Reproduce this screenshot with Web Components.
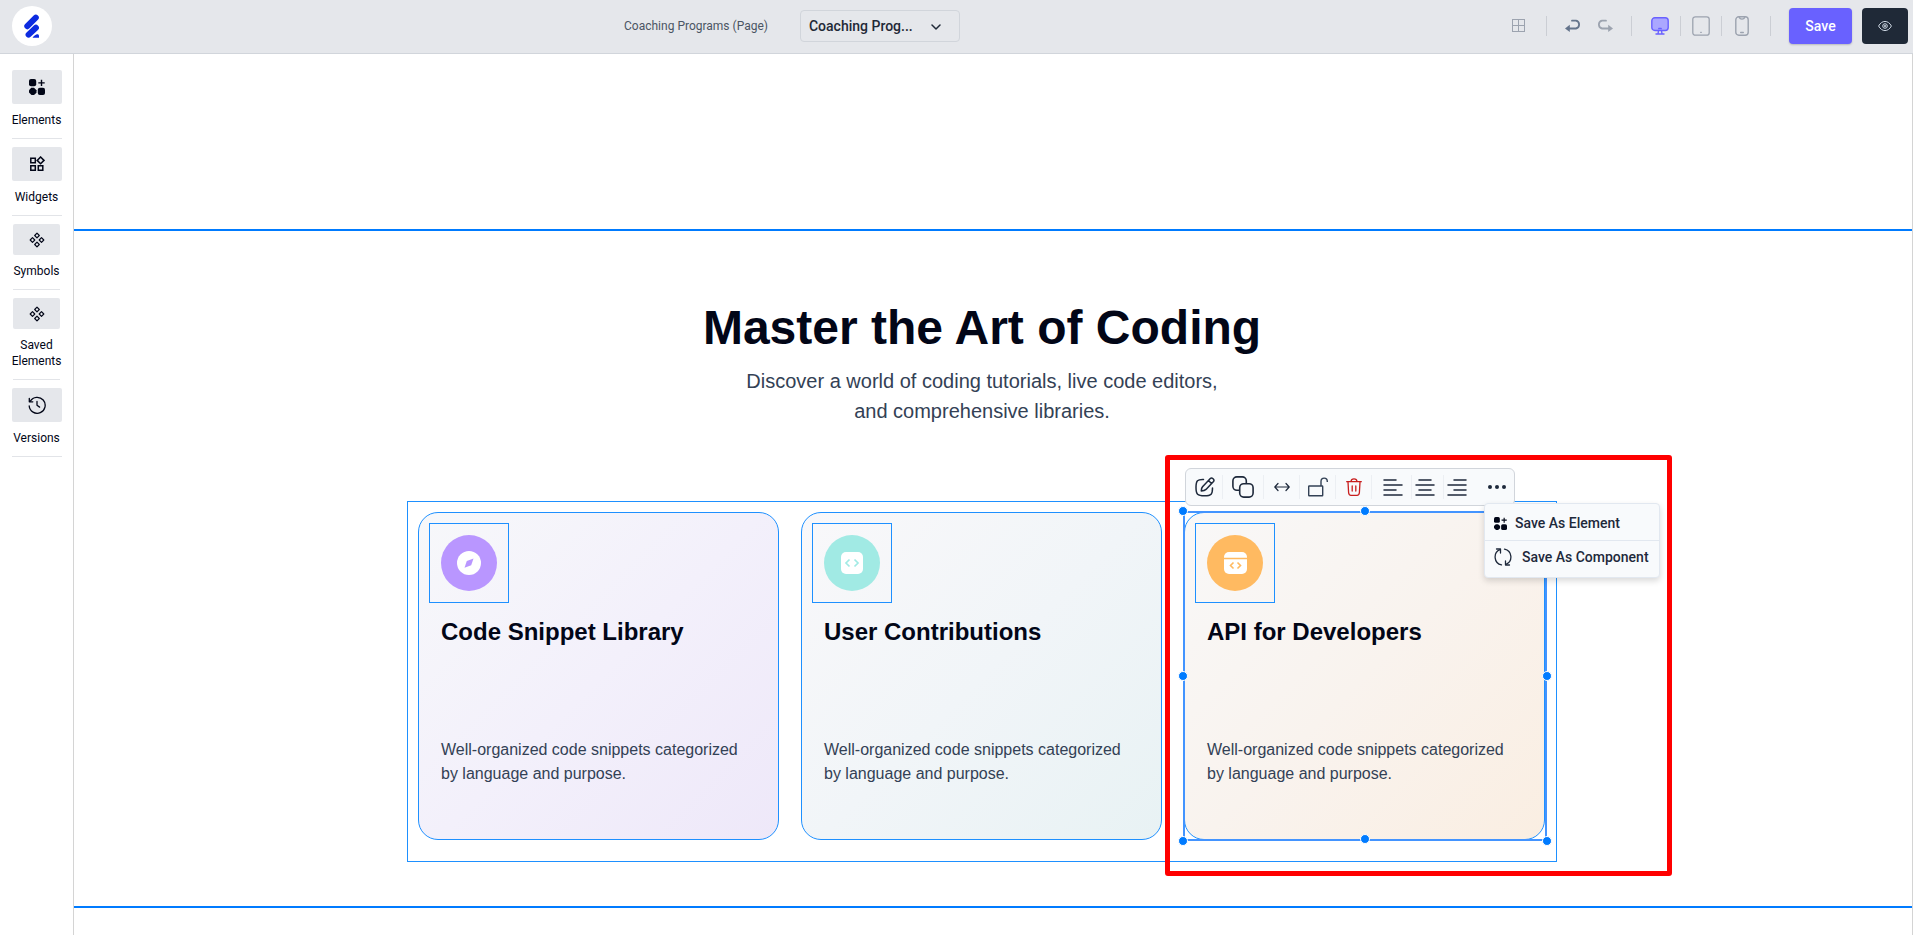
<!DOCTYPE html>
<html lang="en">
<head>
<meta charset="utf-8">
<title>Page Builder</title>
<style>
  html, body { margin: 0; height: 100%; }
  body { font-family: Roboto, "Open Sans", sans-serif; color: #020617; background: #fff; overflow: hidden; }
</style>
</head>
<body>
<page-builder></page-builder>

<script>
const ICONS = {
  elements: ['0 0 16 16', '<g fill="currentColor"><rect width="7.2" height="7.2" rx="2"/><rect x="8.8" y="8.8" width="7.2" height="7.2" rx="2"/><path d="M2.2 8.8h2.8l2.5 2.4v2.5L5 16H2.5L0 13.6v-2.4z"/><path d="M11.8.8h1.4v2.4h2.5v1.4h-2.5V7h-1.4V4.600H9.300V3.200h2.500z"/></g>'],
  widgets: ['0 0 16 16', '<g fill="none" stroke="currentColor" stroke-width="1.500"><path d="M1.800 2.200h4.500v4.500H1.800zM1.800 9.700h4.500v4.500H1.800zM9.300 9.700h4.500v4.500H9.300zM11.600 1l3.400 3.400-3.400 3.400-3.400-3.400z"/></g>'],
  symbols: ['0 0 16 16', '<g fill="none" stroke="currentColor" stroke-width="1.200" stroke-linejoin="round"><path d="M8 1.200 10.300 3.500 8 5.800 5.700 3.500zM8 10.200l2.300 2.300L8 14.800l-2.300-2.300zM3.500 5.700 5.800 8l-2.300 2.300L1.200 8zM12.500 5.700 14.800 8l-2.300 2.300L10.200 8z"/></g>'],
  versions: ['0 0 18 18', '<g fill="none" stroke="currentColor" stroke-width="1.300" stroke-linecap="round" stroke-linejoin="round"><path d="M2.300 5.200A8 8 0 1 1 1.200 10"/><path d="M1.300 2.300v3.500h3.500M9 5.500v3.800l2.600 1.800"/></g>'],
  logo: ['0 0 40 40', '<g stroke="#0c2be0" stroke-width="6" stroke-linecap="round"><path d="M15.300 20.200l8.500-8.500"/><path d="M16.600 28.600l7.300-6.900"/></g><path fill="#0c2be0" d="M20.500 31.800c2.500-3.800 6.500-4.600 6.500-1.600v1.600z"/>'],
  grid: ['0 0 14 14', '<g fill="none" stroke="#9ca3af" stroke-width="1"><rect x=".5" y=".5" width="12" height="12"/><path d="M6.500.500v12M.500 6.500h12"/></g>'],
  undo: ['0 0 16 14', '<path d="M3.500 9.500h7.500a4 4 0 0 0 0-7.800H7" fill="none" stroke="currentColor" stroke-width="1.800" stroke-linecap="round"/><path d="M4.800 5.800v7.200L0 9.500z" fill="currentColor"/>'],
  redo: ['0 0 16 14', '<path d="M12.500 9.500H5a4 4 0 0 1 0-7.800h4" fill="none" stroke="currentColor" stroke-width="1.800" stroke-linecap="round"/><path d="M11.200 5.800v7.200L16 9.500z" fill="currentColor"/>'],
  desktop: ['0 0 18 18', '<g stroke="#6961ff" stroke-width="1.400" stroke-linecap="round"><rect x=".8" y=".8" width="16.400" height="12.700" rx="3" fill="#aba7ff"/><path d="M7.500 13.500 7 17M10.500 13.500l.5 3.500M5 17h8M7.800 11.500h2.400"/></g>'],
  tablet: ['0 0 18 20', '<g fill="none" stroke="#9ca3af" stroke-width="1.300" stroke-linecap="round"><rect x=".8" y=".8" width="16.400" height="18.400" rx="2.500"/><path d="M8.700 16.300h.6"/></g>'],
  phone: ['0 0 14 20', '<g fill="none" stroke="#9ca3af" stroke-width="1.400" stroke-linecap="round"><rect x=".8" y=".8" width="12.400" height="18.400" rx="3"/><path d="M4.300 1.200c.4 2.500 5 2.500 5.400 0M5.700 16.500h2.600"/></g>'],
  eye: ['0 0 14 12', '<g fill="none" stroke="#cbd5e1" stroke-width="1"><path d="M.6 6C3.800-.1 10.200-.1 13.400 6 10.200 12.100 3.800 12.100.6 6z"/><circle cx="7" cy="6" r="2.300"/><circle cx="7" cy="6" r=".8"/></g>'],
  chevron: ['0 0 10 6', '<path d="M1 1l4 4 4-4" fill="none" stroke="#1f2937" stroke-width="1.500" stroke-linecap="round" stroke-linejoin="round"/>'],
  edit: ['0 0 20 20', '<g fill="none" stroke="currentColor" stroke-width="1.500" stroke-linecap="round" stroke-linejoin="round"><path d="M8.500 2.500C2.500 2.300 1 3.500 1 10.500s1.500 8.300 8.500 8.300 8-1.800 8-7.800"/><path d="M15.300 1.500c1.600-1.600 4.700 1.300 3.200 3l-7.500 7.900c-1 1-3 1.500-4.700 1.500.1-1.700.5-3.500 1.500-4.500zM13.500 3.500l3 3"/></g>'],
  copy: ['0 0 22 22', '<g fill="none" stroke="currentColor" stroke-width="1.600"><rect x=".9" y=".9" width="13.400" height="13.400" rx="4"/><rect x="7.700" y="7.700" width="13.400" height="13.400" rx="4" fill="#f8fafc"/></g>'],
  width: ['0 0 16 10', '<path d="M1 5h14M4 1.500.8 5 4 8.500M12 1.500 15.200 5 12 8.500" fill="none" stroke="currentColor" stroke-width="1.200" stroke-linecap="round" stroke-linejoin="round"/>'],
  unlock: ['0 0 20 20', '<g fill="none" stroke="#334155" stroke-width="1.400"><rect x=".7" y="9" width="14" height="9.800" rx=".5"/><path d="M13 9V4.500c0-4.500 6.300-4.500 6.300 0V5"/></g>'],
  trash: ['0 0 16 18', '<g fill="none" stroke="#c81e1e" stroke-width="1.300" stroke-linecap="round" stroke-linejoin="round"><path d="M.7 3.700h14.600M5 3.500C5.300 0 10.700 0 11 3.500M2 4l.6 10.500c.2 2.500.9 2.800 2.400 2.800h6c1.500 0 2.200-.3 2.400-2.800L14 4M6.200 8v5M9.800 8v5"/></g>'],
  alignLeft: ['0 0 20 18', '<path d="M1 2h12M1 7h18M1 12h12M1 17h18" fill="none" stroke="currentColor" stroke-width="1.500" stroke-linecap="round"/>'],
  alignCenter: ['0 0 20 18', '<path d="M4 2h12M1 7h18M4 12h12M1 17h18" fill="none" stroke="currentColor" stroke-width="1.500" stroke-linecap="round"/>'],
  alignRight: ['0 0 20 18', '<path d="M7 2h12M1 7h18M7 12h12M1 17h18" fill="none" stroke="currentColor" stroke-width="1.500" stroke-linecap="round"/>'],
  dots: ['0 0 18 4', '<g fill="currentColor"><circle cx="2" cy="2" r="2"/><circle cx="9" cy="2" r="2"/><circle cx="16" cy="2" r="2"/></g>'],
  cycle: ['0 0 18 18', '<g fill="none" stroke="currentColor" stroke-width="1.300" stroke-linecap="round" stroke-linejoin="round"><path d="M7.500 16.900A8 8 0 0 1 6 1.700M10.500 1.100A8 8 0 0 1 12 16.300"/><path d="M2.500 1H6.500V5M15.500 17h-4v-4"/></g>'],
  compass: ['0 0 56 56', '<circle cx="28" cy="28" r="28" fill="#b996ff"/><circle cx="28" cy="28" r="12" fill="#fff"/><path d="M32.500 23.500l-2.300 6.700-6.700 2.600 2.300-6.900z" fill="#b996ff"/>'],
  code: ['0 0 56 56', '<circle cx="28" cy="28" r="28" fill="#a1eae4"/><rect x="17" y="17" width="22" height="22" rx="5" fill="#fff"/><path d="M25.500 24.500 22 28l3.500 3.500M30.500 24.500 34 28l-3.500 3.500" fill="none" stroke="#a1eae4" stroke-width="1.700"/>'],
  api: ['0 0 56 56', '<circle cx="28" cy="28" r="28" fill="#ffba61"/><rect x="17" y="17" width="23" height="22" rx="5" fill="#fff"/><path d="M17 23.500h23M26.500 27.500l-3 3 3 3M30.500 27.500l3 3-3 3" fill="none" stroke="#ffba61" stroke-width="1.600"/>']
};

function define(name, html, setup) {
  const tpl = document.createElement('template');
  tpl.innerHTML = html;
  customElements.define(name, class extends HTMLElement {
    connectedCallback() {
      if (this.shadowRoot) return;
      const root = this.attachShadow({ mode: 'open' });
      root.append(tpl.content.cloneNode(true));
      if (setup) setup(this, root);
    }
  });
}

define('ui-icon', `
  <style>
    :host { display: block; flex: none; }
    svg { display: block; }
  </style>
  <svg aria-hidden="true"></svg>`,
  (host, root) => {
    const [box, art] = ICONS[host.getAttribute('name')];
    const [, , w, h] = box.split(' ').map(Number);
    const width = Number(host.getAttribute('size')) || w;
    const svg = root.querySelector('svg');
    svg.setAttribute('viewBox', box);
    svg.setAttribute('width', width);
    svg.setAttribute('height', Math.round(width * h / w));
    svg.innerHTML = art;
  });

define('top-bar', `
  <style>
    :host { display: flex; justify-content: space-between; align-items: center; height: 52px; padding: 0 5px 1px 12px; background: #e5e7eb; border-bottom: 1px solid #d1d5db; }
    .logo { width: 40px; height: 40px; border-radius: 50%; background: #fff; }
    .page, .tools { display: flex; align-items: center; }
    .page { gap: 32px; padding-left: 20px; }
    label { font-size: 12px; line-height: 16px; color: #4b5563; }
    .pick { position: relative; width: 160px; height: 32px; }
    .pick ui-icon { position: absolute; right: 19px; top: 14px; pointer-events: none; }
    select { appearance: none; box-sizing: border-box; width: 100%; height: 100%; padding: 0 40px 0 8px; border: 1px solid #d1d5db; border-radius: 4px; background: transparent; font: 500 14px/20px Roboto, sans-serif; color: #1f2937; }
    button { display: grid; place-items: center; padding: 0; border: 0; background: none; color: #9ca3af; }
    .undo { color: #64748b; }
    .line { width: 1px; height: 20px; background: #cbced4; }
    .tools { gap: 16px; }
    .grid { padding-right: 4px; }
    .history { display: flex; gap: 16px; padding: 0 2px; }
    .devices { display: flex; align-items: center; gap: 11px; padding: 0 3px; }
    .devices button { min-width: 18px; }
    .save { width: 63px; height: 36px; margin-left: 2px; border-radius: 4px; background: #6961ff; color: #fff; font: 500 14px/20px Roboto, sans-serif; box-shadow: 0 1px 2px #0003; }
    .preview { width: 46px; height: 36px; margin-left: -6px; border-radius: 4px; background: #1f2937; }
  </style>
  <div class="logo"><ui-icon name="logo"></ui-icon></div>
  <div class="page">
    <label for="page">Coaching Programs (Page)</label>
    <div class="pick"><select id="page"><option>Coaching Prog...</option></select><ui-icon name="chevron"></ui-icon></div>
  </div>
  <div class="tools">
    <button class="grid" aria-label="Grid"><ui-icon name="grid"></ui-icon></button>
    <span class="line"></span>
    <div class="history">
      <button class="undo" aria-label="Undo"><ui-icon name="undo"></ui-icon></button>
      <button aria-label="Redo"><ui-icon name="redo"></ui-icon></button>
    </div>
    <span class="line"></span>
    <div class="devices">
      <button aria-label="Desktop"><ui-icon name="desktop"></ui-icon></button>
      <span class="line"></span>
      <button aria-label="Tablet"><ui-icon name="tablet"></ui-icon></button>
      <span class="line"></span>
      <button aria-label="Phone"><ui-icon name="phone"></ui-icon></button>
    </div>
    <span class="line"></span>
    <button class="save">Save</button>
    <button class="preview" aria-label="Preview"><ui-icon name="eye"></ui-icon></button>
  </div>`);

define('side-item', `
  <style>
    :host { display: flex; flex-direction: column; align-items: center; width: 50px; padding-bottom: 10px; border-bottom: 1px solid #e2e4e8; }
    :host([small]) { width: 47px; }
    button { display: grid; place-items: center; width: 100%; height: 34px; padding: 0; border: 0; border-radius: 2px; background: #e5e7eb; color: #020617; }
    :host([small]) button { height: 31px; }
    span { margin-top: 8px; font-size: 12px; line-height: 16px; text-align: center; }
  </style>
  <button aria-labelledby="name"></button>
  <span id="name"><slot></slot></span>`,
  (host, root) => {
    const icon = document.createElement('ui-icon');
    icon.setAttribute('name', host.getAttribute('icon'));
    icon.setAttribute('size', host.getAttribute('size') || 16);
    root.querySelector('button').append(icon);
  });

define('side-bar', `
  <style>
    :host { display: flex; flex-direction: column; align-items: center; gap: 8px; width: 73px; padding-top: 16px; box-sizing: border-box; flex: none; }
  </style>
  <side-item icon="elements">Elements</side-item>
  <side-item icon="widgets">Widgets</side-item>
  <side-item icon="symbols" small>Symbols</side-item>
  <side-item icon="symbols" small>Saved<br>Elements</side-item>
  <side-item icon="versions" size="18">Versions</side-item>`);

define('feature-card', `
  <style>
    :host { display: grid; position: relative; }
    article { border: 1px solid #1e90ff; border-radius: 20px; padding: 10px 10px 53px; background: linear-gradient(135deg, var(--from), var(--mid), var(--to)); }
    .icon { width: 56px; padding: 11px; border: 1px solid #1e90ff; }
    h3, p { margin: 0; padding: 0 12px; }
    h3 { margin-top: 13px; font: bold 24px/32px "Liberation Sans", Arial, sans-serif; color: #020617; }
    p { margin-top: 90px; font: 16px/24px "Liberation Sans", Arial, sans-serif; color: #334155; }
  </style>
  <article>
    <div class="icon"><slot name="icon"></slot></div>
    <h3><slot name="title"></slot></h3>
    <p><slot></slot></p>
  </article>
  <slot name="overlay"></slot>`);

define('selection-frame', `
  <style>
    :host { display: block; position: absolute; inset: -1px -2px -1px -1px; border: 2px solid #4394ff; pointer-events: none; }
    i { position: absolute; width: 8px; height: 8px; margin: -5px; border: 1px solid #fff; border-radius: 50%; background: #007bff; }
    .t { top: -2px; } .m { top: 50%; } .b { top: calc(100% + 2px); }
    .l { left: -2px; } .c { left: 50%; } .r { left: calc(100% + 2px); }
    .b.c { top: 100%; }
  </style>
  <i class="t l"></i><i class="t c"></i><i class="m l"></i><i class="m r"></i><i class="b l"></i><i class="b c"></i><i class="b r"></i>`);

define('element-toolbar', `
  <style>
    :host { display: flex; align-items: center; position: absolute; left: 1px; top: -44px; box-sizing: border-box; width: 330px; height: 38px; padding-left: 1px; border: 1px solid #d1d5db; border-radius: 6px; background: #f8fafc; color: #1e293b; }
    button { display: flex; align-items: center; justify-content: center; box-sizing: border-box; width: 36px; height: 24px; padding: 0; border: 0; border-right: 1px solid #eceff3; background: none; color: inherit; }
    .wide { width: 41px; }
    .align { width: 32px; justify-content: flex-start; padding-left: 3px; }
    .align.first { width: 40px; padding-left: 11px; }
    .last { border: 0; }
    .more { flex: 1; border: 0; padding-left: 3px; }
  </style>
  <button aria-label="Edit"><ui-icon name="edit"></ui-icon></button>
  <button class="wide" aria-label="Duplicate"><ui-icon name="copy"></ui-icon></button>
  <button aria-label="Width"><ui-icon name="width"></ui-icon></button>
  <button aria-label="Unlock"><ui-icon name="unlock"></ui-icon></button>
  <button aria-label="Delete"><ui-icon name="trash"></ui-icon></button>
  <button class="align first" aria-label="Align left"><ui-icon name="alignLeft"></ui-icon></button>
  <button class="align" aria-label="Align center"><ui-icon name="alignCenter"></ui-icon></button>
  <button class="align last" aria-label="Align right"><ui-icon name="alignRight"></ui-icon></button>
  <button class="more" aria-label="More"><ui-icon name="dots"></ui-icon></button>`);

define('save-menu', `
  <style>
    :host { display: block; position: absolute; left: 300px; top: -9px; width: 174px; padding-bottom: 5px; border: 1px solid #e2e8f0; border-radius: 4px; background: #f8fafc; box-shadow: 0 3px 6px #00000026; }
    button { display: flex; align-items: center; gap: 8px; width: 100%; height: 36px; padding: 2px 9px 0; border: 0; background: none; font: 500 14px/20px Roboto, sans-serif; color: #1e293b; white-space: nowrap; }
    button + button { height: 32px; padding-top: 0; border-top: 1px solid #e2e8f0; gap: 10px; }
    .mark { color: #020617; }
  </style>
  <button><ui-icon class="mark" name="elements" size="13"></ui-icon>Save As Element</button>
  <button><ui-icon name="cycle"></ui-icon>Save As Component</button>`);

define('callout-frame', `
  <style>:host { display: block; position: absolute; inset: -57px -127px -36px -19px; border: 5px solid #f00; border-radius: 3px; pointer-events: none; }</style>`);

define('design-canvas', `
  <style>
    :host { display: flex; flex-direction: column; flex: 1; min-width: 0; overflow: hidden; border: solid #d4d4d4; border-width: 0 1px; }
    .above { height: 175px; flex: none; }
    .features { flex: none; padding: 69px 22px 44px 0; border: solid #007bff; border-width: 2px 0; }
    h2 { margin: 0; text-align: center; font: bold 48px/56px "Liberation Sans", Arial, sans-serif; color: #020617; }
    .lead { margin: 10px 0 75px; text-align: center; font: 20px/30px "Liberation Sans", Arial, sans-serif; color: #334155; }
    .cards { display: grid; grid-template-columns: repeat(3, 1fr); gap: 22px; box-sizing: border-box; max-width: 1150px; margin: 0 auto; padding: 10px 11px 21px 10px; border: 1px solid #1e90ff; }
    .violet { --from: #f7f8fa; --mid: #f3f0fb; --to: #eee8f9; }
    .teal { --from: #f9f8fa; --mid: #f1f5f8; --to: #e8f2f4; }
    .amber { --from: #f9f8f8; --mid: #f9f3ee; --to: #faeee2; }
  </style>
  <div class="above"></div>
  <section class="features">
    <h2>Master the Art of Coding</h2>
    <p class="lead">Discover a world of coding tutorials, live code editors,<br>and comprehensive libraries.</p>
    <div class="cards">
      <feature-card class="violet">
        <ui-icon slot="icon" name="compass"></ui-icon>
        <span slot="title">Code Snippet Library</span>
        Well-organized code snippets categorized<br>by language and purpose.
      </feature-card>
      <feature-card class="teal">
        <ui-icon slot="icon" name="code"></ui-icon>
        <span slot="title">User Contributions</span>
        Well-organized code snippets categorized<br>by language and purpose.
      </feature-card>
      <feature-card class="amber">
        <ui-icon slot="icon" name="api"></ui-icon>
        <span slot="title">API for Developers</span>
        Well-organized code snippets categorized<br>by language and purpose.
        <selection-frame slot="overlay"></selection-frame>
        <element-toolbar slot="overlay"></element-toolbar>
        <save-menu slot="overlay"></save-menu>
        <callout-frame slot="overlay"></callout-frame>
      </feature-card>
    </div>
  </section>`);

define('page-builder', `
  <style>
    :host { display: flex; flex-direction: column; height: 100vh; }
    main { display: flex; flex: 1; min-height: 0; }
  </style>
  <top-bar></top-bar>
  <main><side-bar></side-bar><design-canvas></design-canvas></main>`);
</script>
</body>
</html>
